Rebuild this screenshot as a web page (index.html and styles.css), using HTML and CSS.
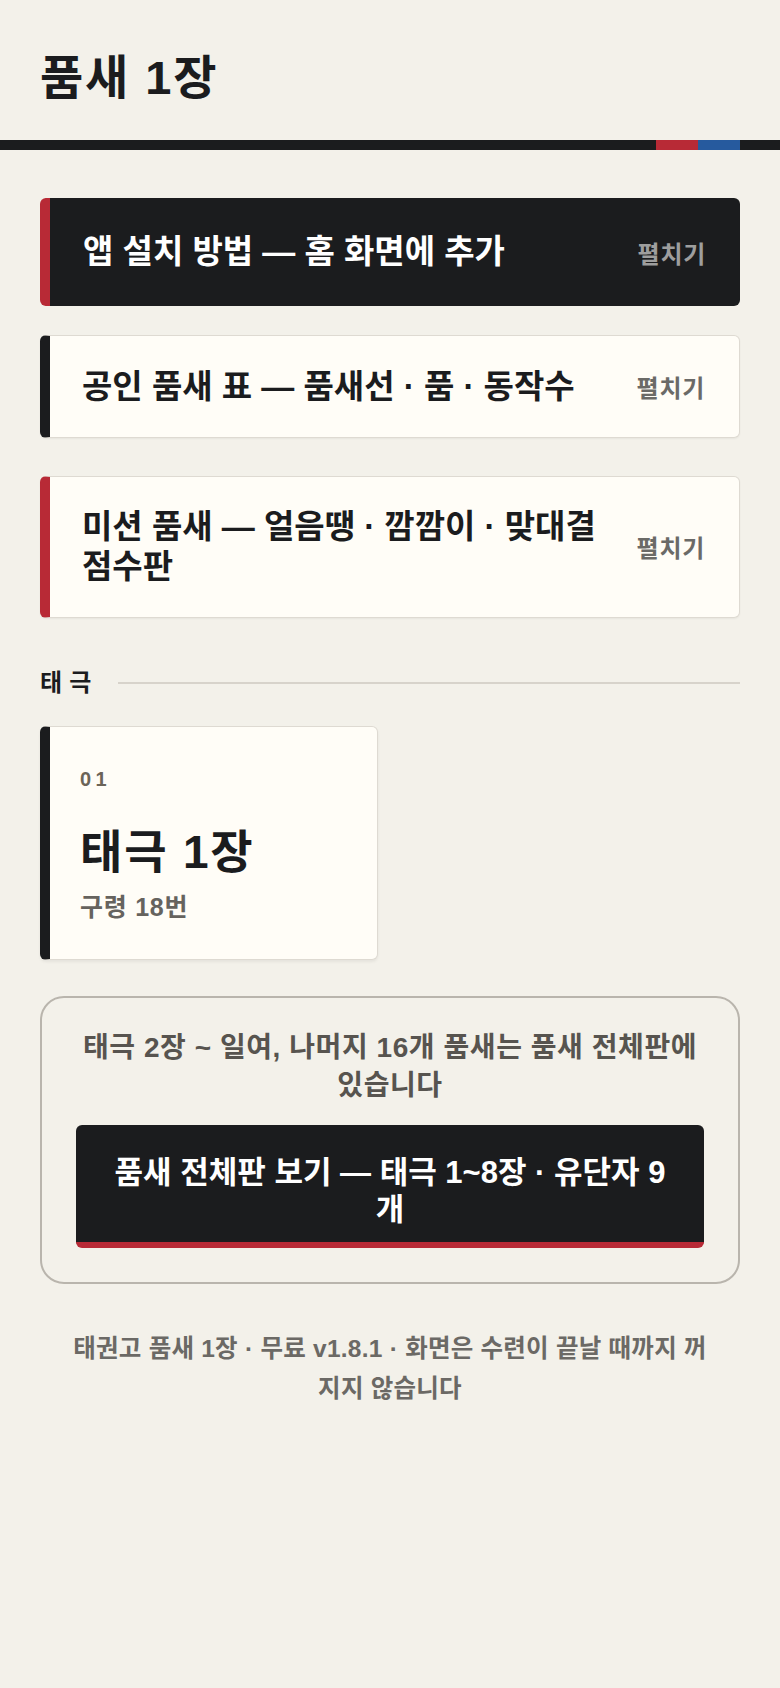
FILE: index.html
```html
<!DOCTYPE html>
<html lang="ko">
<head>
<meta charset="utf-8">
<title>품새 1장</title>
<link rel="stylesheet" href="styles.css">
</head>
<body>
<header class="top">
  <h1 class="title">품새 1장</h1>
</header>
<main class="page">
  <div class="panel panel-dark">
    <h2 class="panel-title">앱 설치 방법 — 홈 화면에 추가</h2>
    <span class="panel-toggle">펼치기</span>
  </div>
  <div class="panel-group">
    <div class="panel panel-light">
      <h2 class="panel-title">공인 품새 표 — 품새선 · 품 · 동작수</h2>
      <span class="panel-toggle">펼치기</span>
    </div>
    <div class="panel panel-light panel-red">
      <h2 class="panel-title">미션 품새 — 얼음땡 · 깜깜이 · 맞대결 점수판</h2>
      <span class="panel-toggle">펼치기</span>
    </div>
  </div>
  <div class="section-head">
    <span class="section-label">태극</span>
    <span class="section-line"></span>
  </div>
  <div class="grid">
    <div class="form-card">
      <div class="form-num">01</div>
      <div class="form-name">태극 1장</div>
      <div class="form-meta">구령 18번</div>
    </div>
  </div>
  <div class="more">
    <p class="more-text">태극 2장 ~ 일여, 나머지 16개 품새는 품새 전체판에 있습니다</p>
    <div class="more-btn">품새 전체판 보기 — 태극 1~8장 · 유단자 9개</div>
  </div>
  <p class="foot">태권고 품새 1장 · 무료 v1.8.1 · 화면은 수련이 끝날 때까지 꺼지지 않습니다</p>
</main>
</body>
</html>
```

FILE: styles.css
```css
html, body {
  margin: 0;
  padding: 0;
}
body {
  background: #f3f1ea;
  color: #1b1c1e;
  font-family: "Liberation Sans", "Noto Sans CJK KR", sans-serif;
}
.top {
  position: relative;
  padding: 50px 40px 34px;
  border-bottom: 10px solid #1b1c1e;
}
.top::after {
  content: "";
  position: absolute;
  right: 40px;
  bottom: -10px;
  width: 84px;
  height: 10px;
  background: linear-gradient(to right, #b82a36 0 50%, #265a9e 50% 100%);
}
.title {
  margin: 0;
  font-size: 47px;
  line-height: 56px;
  font-weight: 700;
  letter-spacing: 0.04em;
}
.page {
  padding: 48px 40px 60px;
}
.panel {
  display: flex;
  align-items: center;
  gap: 24px;
  border-radius: 6px;
}
.panel-dark {
  background: #1b1c1e;
  color: #ffffff;
  border-left: 10px solid #b82a36;
  padding: 34.25px 34px 34.25px 33px;
  margin-bottom: 29px;
}
.panel-group {
  display: flex;
  flex-direction: column;
  gap: 38px;
}
.panel-light {
  background: #fffdf7;
  border: 1px solid #dedad2;
  border-left: 10px solid #1b1c1e;
  padding: 30.5px 34px 30.5px 32px;
  box-shadow: 0 1px 2px rgba(0,0,0,0.05);
}
.panel-red {
  border-left-color: #b82a36;
}
.panel-title {
  flex: 1;
  margin: 0;
  font-size: 33px;
  line-height: 39.5px;
  font-weight: 700;
  word-break: keep-all;
}
.panel-toggle {
  font-size: 24px;
  font-weight: 700;
  letter-spacing: 0.03em;
  color: #6b6a67;
  white-space: nowrap;
}
.panel-dark .panel-toggle {
  color: #9e9e9e;
}
.section-head {
  display: flex;
  align-items: center;
  gap: 19px;
  margin: 50px 0 28px;
}
.section-label {
  font-size: 24px;
  line-height: 30px;
  font-weight: 700;
  letter-spacing: 0.3em;
}
.section-line {
  flex: 1;
  height: 2px;
  background: #d7d3cb;
}
.grid {
  display: grid;
  grid-template-columns: 1fr 1fr;
  gap: 24px;
}
.form-card {
  background: #fffdf7;
  border: 1px solid #dedad2;
  border-left: 10px solid #1b1c1e;
  border-radius: 6px;
  padding: 38px 30px 36px;
  box-shadow: 0 2px 3px rgba(0,0,0,0.06);
}
.form-num {
  font-size: 20px;
  line-height: 28px;
  font-weight: 700;
  letter-spacing: 0.22em;
  color: #6b6458;
}
.form-name {
  margin-top: 32px;
  font-size: 46px;
  line-height: 54px;
  font-weight: 700;
  letter-spacing: 0.04em;
}
.form-meta {
  margin-top: 12px;
  font-size: 25px;
  line-height: 32px;
  font-weight: 700;
  letter-spacing: 0.03em;
  color: #66635e;
}
.more {
  margin-top: 36px;
  border: 2px solid #b9b5ad;
  border-radius: 24px;
  padding: 31px 34px 34px;
  text-align: center;
}
.more-text {
  margin: 0 0 20px;
  font-size: 28px;
  line-height: 38px;
  font-weight: 700;
  letter-spacing: 0.02em;
  color: #57544f;
}
.more-btn {
  background: #1b1c1e;
  color: #ffffff;
  border-radius: 6px;
  border-bottom: 6px solid #b82a36;
  padding: 29px 32px 13px;
  font-size: 31px;
  line-height: 37.5px;
  font-weight: 700;
}
.foot {
  margin: 45px 0 0;
  padding: 0 28px;
  text-align: center;
  font-size: 24.5px;
  line-height: 40px;
  font-weight: 700;
  letter-spacing: 0.01em;
  color: #6b6965;
}
```
